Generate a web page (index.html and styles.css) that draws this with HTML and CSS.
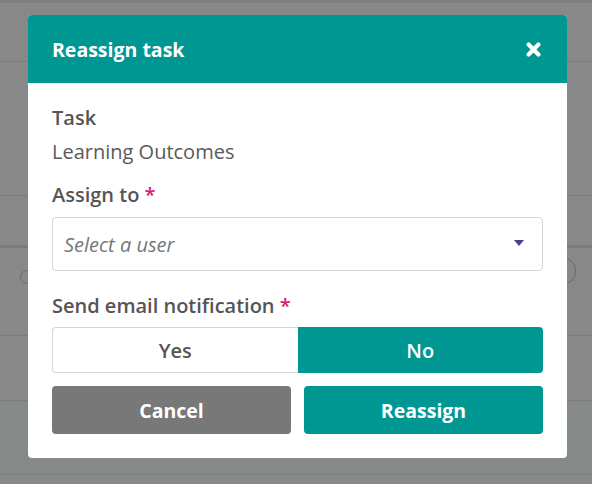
FILE: index.html
```html
<!DOCTYPE html>
<html lang="en">
<head>
<meta charset="utf-8">
<title>Reassign task</title>
<link rel="stylesheet" href="styles.css">
</head>
<body>
<div class="backdrop">
  <div class="bg-top"></div>
  <div class="bg-row bg-r1"></div>
  <div class="bg-row bg-r2"></div>
  <div class="bg-row bg-r3"></div>
  <div class="bg-row bg-r4"><span class="bg-icon bg-icon-left"></span><span class="bg-icon bg-icon-right"></span></div>
  <div class="bg-row bg-r5"></div>
  <div class="bg-foot"></div>
  <div class="bg-end"></div>
</div>

<div class="modal" role="dialog" aria-labelledby="modal-title">
  <div class="modal-header">
    <h2 id="modal-title" class="modal-title">Reassign task</h2>
    <button class="close-btn" aria-label="Close">
      <svg width="15" height="15" viewBox="0 0 15 15"><path d="M2.6 2.6 L12.4 12.4 M12.4 2.6 L2.6 12.4" stroke="#fff" stroke-width="4.2" stroke-linecap="round"/></svg>
    </button>
  </div>
  <div class="modal-body">
    <div class="field-label">Task</div>
    <div class="field-value">Learning Outcomes</div>
    <div class="field-label label-gap">Assign to <span class="req">*</span></div>
    <div class="select">
      <span class="placeholder">Select a user</span>
      <span class="caret"></span>
    </div>
    <div class="field-label label-gap2">Send email notification <span class="req">*</span></div>
    <div class="toggle">
      <div class="toggle-opt">Yes</div>
      <div class="toggle-opt active">No</div>
    </div>
    <div class="actions">
      <button class="btn btn-cancel">Cancel</button>
      <button class="btn btn-primary">Reassign</button>
    </div>
  </div>
</div>
</body>
</html>
```
FILE: styles.css
```css
* { box-sizing: border-box; }
html, body { margin: 0; padding: 0; }
body {
  width: 592px;
  height: 484px;
  overflow: hidden;
  font-family: "Open Sans", "Noto Sans", sans-serif;
  background: #888888;
  position: relative;
}

.backdrop { display: flex; flex-direction: column; height: 484px; }
.bg-top { height: 3px; background: #7f7f7f; flex: none; }
.bg-row { flex: none; background: #888888; border-bottom: 1px solid #7b7b7b; }
.bg-r1 { height: 59px; }
.bg-r2 { height: 134px; }
.bg-r3 { border-bottom: 3px solid #7c7c7c; height: 52px; }
.bg-r4 { height: 88px; position: relative; }
.bg-r5 { height: 65px; }
.bg-foot { height: 74px; background: #858a89; border-bottom: 1px solid #7b7e7d; flex: none; }
.bg-end { flex: 1; background: #888888; }

.bg-icon {
  position: absolute;
  border: 1.5px solid #6c6c6c;
  border-radius: 50%;
}
.bg-icon-left { left: 20px; top: 22px; width: 14px; height: 14px; }
.bg-icon-right { left: 552px; top: 10px; width: 24px; height: 26px; }

.modal {
  position: absolute;
  left: 28px;
  top: 15px;
  width: 539px;
  background: #fff;
  border-radius: 4px;
  overflow: hidden;
}

.modal-header {
  height: 68px;
  background: #009793;
  display: flex;
  align-items: center;
  justify-content: space-between;
  padding: 0 24px;
}
.modal-title {
  margin: 0;
  color: #fff;
  font-size: 19.5px;
  font-weight: 700;
  line-height: 24px;
  padding-top: 1px;
}
.close-btn {
  background: none;
  border: 0;
  padding: 0;
  margin-right: 2px;
  width: 15px;
  height: 15px;
  display: flex;
  cursor: pointer;
}

.modal-body {
  padding: 23px 24px 24px;
  color: #555555;
}
.field-label {
  font-size: 20px;
  font-weight: 600;
  line-height: 24px;
  color: #555555;
}
.field-value {
  font-size: 20px;
  font-weight: 400;
  line-height: 24px;
  margin-top: 10px;
  color: #5a5a5a;
}
.label-gap { margin-top: 19px; }
.label-gap2 { margin-top: 23px; }
.req { color: #d6197a; }

.select {
  margin-top: 10px;
  height: 54px;
  border: 1px solid #d5d5d5;
  border-radius: 4px;
  display: flex;
  align-items: center;
  justify-content: space-between;
  padding: 0 18px 0 11px;
}
.placeholder {
  font-style: italic;
  font-size: 20px;
  color: #777777;
}
.caret {
  width: 0;
  height: 0;
  border-left: 5px solid transparent;
  border-right: 5px solid transparent;
  border-top: 6px solid #4a3e8e;
  margin-top: -2px;
}

.toggle {
  margin-top: 9px;
  display: grid;
  grid-template-columns: 1fr 1fr;
  height: 46px;
}
.toggle-opt {
  display: flex;
  align-items: center;
  justify-content: center;
  font-size: 20px;
  font-weight: 600;
  color: #555555;
  border: 1px solid #d5d5d5;
  border-right: 0;
  border-radius: 4px 0 0 4px;
  background: #fff;
}
.toggle-opt.active {
  background: #009793;
  color: #fff;
  border: 0;
  border-radius: 0 4px 4px 0;
}

.actions {
  margin-top: 13px;
  display: grid;
  grid-template-columns: 1fr 1fr;
  gap: 13px;
}
.btn {
  height: 48px;
  border: 0;
  border-radius: 4px;
  font-family: inherit;
  font-size: 19.5px;
  font-weight: 700;
  color: #fff;
  cursor: pointer;
}
.btn-cancel { background: #787878; }
.btn-primary { background: #009793; }
```
